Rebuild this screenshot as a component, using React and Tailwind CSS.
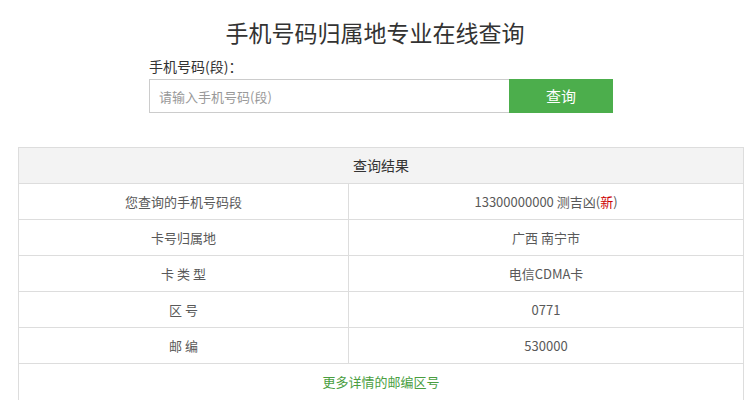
import React from 'react';

const rows = [
    { label: '您查询的手机号码段', value: <>13300000000 测吉凶(<span className="text-[#c00]">新</span>)</> },
    { label: '卡号归属地', value: '广西 南宁市' },
    { label: '卡 类 型', value: '电信CDMA卡' },
    { label: '区 号', value: '0771' },
    { label: '邮 编', value: '530000' },
];

export default function App() {
    return (
        <div className="w-[750px] h-[400px] overflow-hidden bg-white font-['Noto_Sans_CJK_SC',sans-serif]">
            <h1 className="pt-[17px] text-center text-[23px] leading-[30px] text-[#333]">手机号码归属地专业在线查询</h1>

            <div className="ml-[149px] w-[464px] mt-[9px]">
                <div className="text-[14px] leading-[20px] text-[#333]">手机号码(段)：</div>
                <div className="mt-[3px] flex h-[34px]">
                    <input
                        className="flex-1 h-full border border-[#ccc] border-r-0 px-[9px] text-[13px] text-[#333] placeholder:text-[#999] outline-none"
                        placeholder="请输入手机号码(段)"
                    />
                    <button className="w-[104px] h-full bg-[#4cae4c] text-white text-[15px]">查询</button>
                </div>
            </div>

            <div className="mt-[34px] ml-[18px] w-[726px] border border-[#ddd] text-[13px] text-[#595959]">
                <div className="h-[36px] bg-[#f3f3f3] border-b border-[#ddd] flex items-center justify-center text-[14px] text-[#333]">查询结果</div>
                {rows.map(r => (
                    <div key={r.label} className="grid grid-cols-[330px_1fr] h-[36px] border-b border-[#ddd]">
                        <div className="flex items-center justify-center border-r border-[#ddd]">{r.label}</div>
                        <div className="flex items-center justify-center">{r.value}</div>
                    </div>
                ))}
                <div className="h-[36px] flex items-center justify-center text-[#4a9e3f]">更多详情的邮编区号</div>
            </div>
        </div>
    );
}
